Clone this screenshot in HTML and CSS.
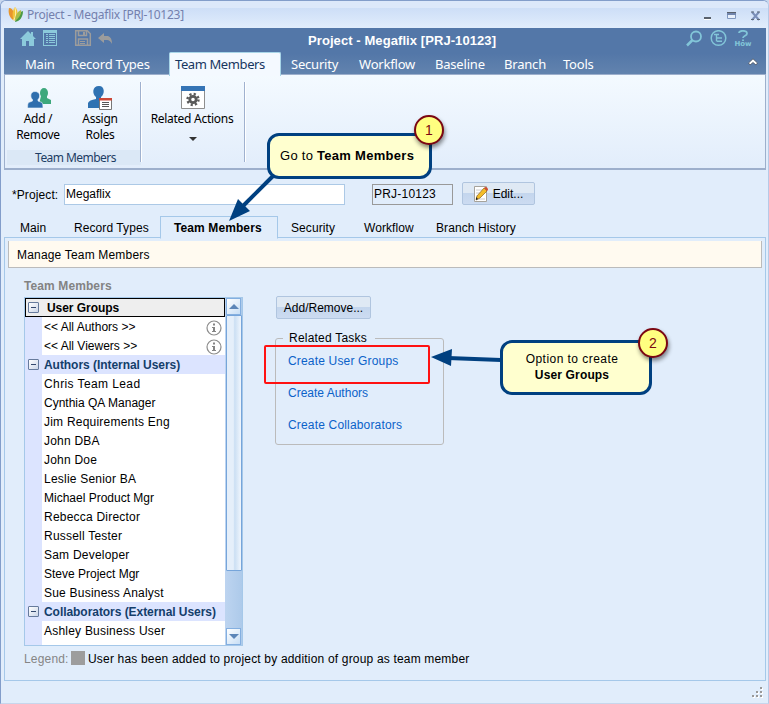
FILE: index.html
```html
<!DOCTYPE html>
<html lang="en">
<head>
<meta charset="utf-8">
<title>Project - Megaflix [PRJ-10123]</title>
<link rel="stylesheet" href="styles.css">
</head>
<body>
<div class="window">
  <header class="titlebar">
    <svg class="logo" width="16" height="16" viewBox="0 0 16 16"><path d="M1 1C6 1 7 9 5 13C1 10 0 5 1 1Z" fill="#e8962c"/><path d="M7 0C11 4 10 10 6 14C4 10 4 4 7 0Z" fill="#f4c33a"/><path d="M7 1C8 5 8 9 6 13" fill="none" stroke="#fff2a8"/><path d="M15 4C15 10 12 14 7 15C8 10 10 6 15 4Z" fill="#4b9a45"/><path d="M13 3C14 7 10 12 7 14C7 9 9 5 13 3Z" fill="#a8bd49"/></svg>
    <span class="caption">Project - Megaflix [PRJ-10123]</span>
    <svg class="controls" width="64" height="14" viewBox="0 0 64 14"><path d="M3 9h7v2H3z" fill="#59616c"/><path d="M3 11h7v1H3z" fill="#fff"/><path d="M26.500 4.500h8v6h-8z" fill="#e8f0fb" stroke="#8198c0"/><path d="M26 4h9v3h-9z" fill="#7185ad"/><path d="M26 4h9v1h-9z" fill="#59616c"/><path d="M51 4l7 8M58 4l-7 8" stroke="#7b8fb9" stroke-width="2"/><path d="M50 4h3M56 4h3M50 11.500h3M56 11.500h3" stroke="#606a79"/></svg>
  </header>

  <section class="ribbon-head">
    <div class="quick">
      <svg width="96" height="18" viewBox="0 0 96 18"><g fill="#8ccadb"><path d="M0 9L8 1l3 3V2h2v4l3 3h-2v7H9v-5H6v5H2V9z"/><g transform="translate(1 0)"><path fill-rule="evenodd" d="M22 0h14v16H22zM23 3v12h12V3z"/><path d="M25 4h2v1h-2zM28 4h6v1h-6zM25 6h2v1h-2zM28 6h6v1h-6zM25 8h2v1h-2zM28 8h6v1h-6zM25 10h2v1h-2zM28 10h6v1h-6zM25 12h2v1h-2zM28 12h6v1h-6z"/></g></g><g fill="none" stroke="#9c9c9c" stroke-width="1.500"><path d="M55.700.700h11.600l3 3v11.600H55.700z"/><path d="M58.500 1v4.500h8V1M58.500 15V9h9v6"/></g><path d="M63 2h2v3h-2zM60 11h5v1h-5zM60 13h5v1h-5zM84 3v3h4q4 1 4 8q-2-4-5-4h-3v3l-6-5z" fill="#9c9c9c"/></svg>
      <h1>Project - Megaflix [PRJ-10123]</h1>
      <div class="help">
      <svg width="41" height="18" viewBox="0 0 41 18" fill="none" stroke="#82c5d8"><circle cx="10" cy="6.500" r="5" stroke-width="1.800"/><path d="M6.500 10L1 15.500" stroke-width="2.500"/><circle cx="32.500" cy="8" r="7.300" stroke-width="1.500"/><path d="M28 4.500h5M30.500 5v6.500M31 8h5M31 11.300h5" stroke-width="1.400"/></svg>
      <div class="how"><svg width="12" height="11" viewBox="0 0 12 11"><path d="M2 3C2 0 10 0 10 3.500C10 6 6 5.500 6 8M6 9.500v1.500" fill="none" stroke="#82c5d8" stroke-width="1.800"/></svg><span>How</span></div>
      </div>
    </div>
    <nav class="ribbon-tabs">
      <span>Main</span><span>Record Types</span><span class="active">Team Members</span><span>Security</span><span>Workflow</span><span>Baseline</span><span>Branch</span><span>Tools</span>
      <svg width="10" height="8" viewBox="0 0 10 8"><path d="M.5 5L5 .800L9.500 5L8 7L5 4.500L2 7z" fill="#fff" stroke="#474f5d" stroke-width=".8"/></svg>
    </nav>
  </section>

  <section class="ribbon">
    <div class="group">
      <div class="tools">
        <div class="tool add">
          <svg width="26" height="24" viewBox="0 0 26 24"><g fill="#3da87c"><ellipse cx="18" cy="7" rx="4" ry="5"/><path d="M15 10h6v2l4 2v4H13z"/></g><path d="M9 5.500c-5 0-5 6-2.500 8v1.500l-4 1.500q-1 1-1 5.500h15.500q0-4.500-1-5.500l-4-1.500v-1.500c2.500-2 2.500-8-3-8z" fill="#2f6fae" stroke="#f0f7fe" stroke-width=".6"/></svg>
          <span>Add /<br>Remove</span>
        </div>
        <div class="tool">
          <svg width="24" height="24" viewBox="0 0 24 24"><path d="M11 0c-7 0-7 8-3 11v2q-7 1-8 4v5h18v-5q-1-3-5-4v-2c4-3 4-11-2-11z" fill="#2f72b2"/><path d="M11.500 12.500h12v11h-12z" fill="#fff" stroke="#777"/><path d="M11 12h13v2.500H11z" fill="#cc4837"/><path d="M14 16.500h7M14 18.500h7M14 20.500h7" stroke="#555"/></svg>
          <span>Assign<br>Roles</span>
        </div>
      </div>
      <div class="group-label">Team Members</div>
    </div>
    <div class="group actions">
      <svg width="24" height="24" viewBox="0 0 24 24"><path d="M.5.500h23v22H.5z" fill="#fff" stroke="#8e8e8e"/><path d="M0 0h24v5H0z" fill="#3574b5"/><circle cx="12" cy="13.500" r="3.200" fill="#fff" stroke="#595959" stroke-width="2.800"/><circle cx="12" cy="13.500" r="5.500" fill="none" stroke="#595959" stroke-width="2.400" stroke-dasharray="2.160 2.160"/></svg>
      <span>Related Actions</span>
      <i class="caret"></i>
    </div>
  </section>

  <div class="project-row">
    <label>*Project:</label>
    <div class="field name">Megaflix</div>
    <div class="field code">PRJ-10123</div>
    <button class="edit"><svg width="15" height="16" viewBox="0 0 15 16"><path d="M.5.500h12v15H.5z" fill="#fff" stroke="#a6a39b"/><path d="M2 4h9M2 7h6M2 10h4M2 13h9" stroke="#ccc"/><path d="M3 10L10 2l3 3l-7 7l-4 2z" fill="#f4bd29" stroke="#8e6721" stroke-width=".7"/><path d="M10 2l1-1q3 0 3 3l-1 1z" fill="#cf4d32"/><path d="M2 11l2 2l-2 1z" fill="#222"/></svg>Edit...</button>
  </div>

  <nav class="page-tabs">
    <span>Main</span><span>Record Types</span><span class="active">Team Members</span><span>Security</span><span>Workflow</span><span>Branch History</span>
  </nav>

  <main class="panel">
    <div class="section-title">Manage Team Members</div>
    <div class="content">
      <div class="team">
        <h2>Team Members</h2>
        <div class="listbox">
          <ul class="rows">
            <li class="head selected"><i class="toggle"></i><b>User Groups</b></li>
            <li class="tight"><span>&lt;&lt; All Authors &gt;&gt;</span><svg class="info" width="16" height="16" viewBox="0 0 16 16"><circle cx="8" cy="8" r="7" fill="none" stroke="#8c8c8c" stroke-width="1.200"/><path d="M7 3.500h2v2H7zM6 7h3v4h1v1H6v-1h1V8H6z" fill="#858585"/></svg></li>
            <li class="tight"><span>&lt;&lt; All Viewers &gt;&gt;</span><svg class="info" width="16" height="16" viewBox="0 0 16 16"><circle cx="8" cy="8" r="7" fill="none" stroke="#8c8c8c" stroke-width="1.200"/><path d="M7 3.500h2v2H7zM6 7h3v4h1v1H6v-1h1V8H6z" fill="#858585"/></svg></li>
            <li class="head"><i class="toggle"></i><b>Authors (Internal Users)</b></li>
            <li class="loose"><span>Chris Team Lead</span></li>
            <li class="tight"><span>Cynthia QA Manager</span></li>
            <li><span>Jim Requirements Eng</span></li>
            <li><span>John DBA</span></li>
            <li><span>John Doe</span></li>
            <li><span>Leslie Senior BA</span></li>
            <li class="tight"><span>Michael Product Mgr</span></li>
            <li><span>Rebecca Director</span></li>
            <li><span>Russell Tester</span></li>
            <li><span>Sam Developer</span></li>
            <li class="tight"><span>Steve Project Mgr</span></li>
            <li><span>Sue Business Analyst</span></li>
            <li class="head"><i class="toggle"></i><b>Collaborators (External Users)</b></li>
            <li><span>Ashley Business User</span></li>
          </ul>
          <div class="scrollbar"><i class="arrow up"></i><i class="thumb"></i><i class="arrow down"></i></div>
        </div>
        <div class="legend"><span>Legend:</span><i></i>User has been added to project by addition of group as team member</div>
      </div>
      <div class="side">
        <button>Add/Remove...</button>
        <fieldset>
          <legend>Related Tasks</legend>
          <a>Create User Groups</a><a class="tight">Create Authors</a><a>Create Collaborators</a>
        </fieldset>
      </div>
    </div>
  </main>
  <svg class="grip" width="12" height="12" viewBox="0 0 12 12"><path d="M9 1h2v2H9zM5 5h2v2H5zM9 5h2v2H9zM1 9h2v2H1zM5 9h2v2H5zM9 9h2v2H9z" fill="#fff"/><path d="M8 0h2v2H8zM4 4h2v2H4zM8 4h2v2H8zM0 8h2v2H0zM4 8h2v2H4zM8 8h2v2H8z" fill="#999"/></svg>
</div>

<svg class="arrows" width="769" height="704" viewBox="0 0 769 704"><g stroke="#004080" stroke-width="4"><path d="M273 176L242 207"/><path d="M501 360L448 358"/></g><path d="M229 221L238 199L250 211zM431 357L452 349L451 366z" fill="#004080"/></svg>
<div class="highlight"></div>
<div class="callout one"><p>Go to <b>Team Members</b></p><i>1</i></div>
<div class="callout two"><p>Option to create<br><b>User Groups</b></p><i>2</i></div>
</body>
</html>
```
FILE: styles.css
```css
* { box-sizing: border-box; }
body { margin: 0; width: 769px; height: 704px; position: relative; overflow: hidden; background: #c9d8ee; font: 12px/16px "Liberation Sans", sans-serif; color: #000; letter-spacing: .22px; }
svg { display: block; flex: none; }
i { font-style: normal; }
p, h1, h2, ul { margin: 0; padding: 0; }

.window { width: 769px; height: 704px; padding: 0 3px; border: 1px solid #829dca; border-right-color: #b7c9e6; border-bottom-color: #c7d6ec; border-radius: 6px 6px 0 0; background: #e1edfb; }
.titlebar { height: 27px; margin: 0 -3px; padding: 0 7px; display: flex; align-items: center; border-radius: 5px 5px 0 0; background: linear-gradient(#dce8fa 0 7px, #cddef7 7px, #e1edfc); }
.caption { flex: 1; margin-left: 3px; font: 12px/18px "Noto Sans", sans-serif; letter-spacing: -.27px; color: #7480ad; }
.controls { margin-right: -4px; }

.ribbon-head { height: 46px; width: 762px; background: linear-gradient(#5377a8 55%, #6283ae); }
.quick { height: 24px; display: flex; align-items: flex-start; padding: 2px 14px 0 16px; color: #fff; }
.quick h1 { margin: 2px 0 0 192px; font: bold 13px/17px "Liberation Sans", sans-serif; letter-spacing: .08px; width: 190px; white-space: nowrap; }
.help { display: flex; margin-left: auto; gap: 7px; }
.how { display: flex; flex-direction: column; align-items: center; width: 18px; color: #82c5d8; font: bold 7px/6px "DejaVu Sans", sans-serif; letter-spacing: 0; }
.ribbon-tabs { height: 22px; padding-left: 21px; display: grid; grid-template-columns: 46px 98px 122px 68px 76px 69px 59px 185px auto; font: 13px/24px "Noto Sans", sans-serif; letter-spacing: -.2px; color: #fff; }
.ribbon-tabs span { white-space: nowrap; }
.ribbon-tabs .active { width: 112px; padding-left: 5px; background: #f4f9ff; border: 1px solid #a8d5e8; border-bottom: 0; border-radius: 2px 2px 0 0; color: #17365f; line-height: 22px; letter-spacing: -.4px; }
.ribbon-tabs svg { margin-top: 6px; }

.ribbon { height: 96px; width: 762px; padding: 2px; display: flex; background: linear-gradient(#f4faff, #e2edfb); border: 1px solid #9dafcc; border-bottom-width: 2px; font: 12px/16px "Noto Sans", sans-serif; letter-spacing: -.28px; text-align: center; }
.group { width: 134px; height: 88px; position: relative; }
.group::after { content: ""; position: absolute; right: -1px; top: 5px; width: 2px; height: 80px; background: linear-gradient(90deg, #9fb1cf 50%, #fff 50%); }
.tools { display: flex; height: 73px; padding: 9px 0 0 0; }
.tool { width: 62px; display: flex; flex-direction: column; align-items: center; gap: 1px; }
.add svg { margin-left: 2px; }
.group-label { height: 15px; line-height: 15px; padding-left: 3px; background: #dbe8f6; color: #1d3d64; letter-spacing: -.55px; }
.actions { width: 104px; padding-top: 9px; display: flex; flex-direction: column; align-items: center; gap: 1px; white-space: nowrap; }
.actions span { margin-left: -2px; }
.caret { margin-top: 9px; border: 4px solid transparent; border-top-color: #333; border-bottom: 0; }

.project-row { display: flex; padding: 12px 0 0 8px; height: 36px; align-items: flex-start; }
.project-row label { width: 52px; padding-top: 5px; letter-spacing: .1px; }
.field { height: 21px; padding: 1px 1px; border: 1px solid #acc9e6; background: #fff; margin-top: 2px; }
.name { width: 281px; margin-right: 27px; letter-spacing: 0; }
.code { width: 81px; margin-right: 9px; background: #e1edfb; border-color: #999; }
button { height: 23px; padding: 0; display: flex; align-items: center; justify-content: center; border: 1px solid #b0c5df; border-radius: 2px; background: linear-gradient(#dfe9f4 50%, #c4d6ed 50%, #ccdbf1); font: inherit; letter-spacing: 0; color: #000; }
.edit { width: 73px; gap: 4px; }

.page-tabs { height: 32px; padding: 10px 0 0 16px; display: grid; grid-template-columns: 54px 86px 131px 73px 72px auto; line-height: 25px; letter-spacing: .08px; }
.page-tabs span { white-space: nowrap; height: 22px; }
.page-tabs .active { height: 23px; width: 118px; padding-left: 13px; line-height: 22px; font-weight: bold; letter-spacing: .1px; border: 1px solid #a5c8e9; border-bottom-color: #e1edfb; background: #e1edfb; position: relative; z-index: 1; }
.panel { width: 762px; height: 444px; border: 1px solid #a5c8e9; padding: 3px 3px 0 3px; margin-top: -1px; }
.section-title { height: 27px; padding: 6px 8px 4px; background: #fffaf0; border: 1px solid #bbb; border-top: 0; letter-spacing: .18px; }
.content { display: flex; padding: 10px 0 0 16px; }
.team { width: 251px; }
h2 { font: bold 12px/16px "Liberation Sans", sans-serif; letter-spacing: .1px; color: #838383; }
.listbox { width: 219px; height: 349px; margin-top: 3px; display: flex; border: 1px solid #a5c8e9; background: #fff; }
.rows { width: 200px; height: 347px; list-style: none; background: linear-gradient(90deg, #dce4ff 17px, #fff 17px); }
.rows li { height: 19px; display: flex; align-items: center; padding-left: 19px; white-space: nowrap; }
.rows .head { padding-left: 3px; gap: 5px; background: #dce4ff; color: #143e6b; }
.rows .selected { height: 19px; padding-left: 2px; gap: 8px; background: #eee; color: #000; border: 1px solid #000; }
.rows b { letter-spacing: -.05px; }
.tight { letter-spacing: 0; }
.loose { letter-spacing: .4px; }
.toggle { width: 11px; height: 11px; border: 1px solid #677b9d; border-radius: 1px; background: linear-gradient(#34486e, #34486e) 2px 4px / 5px 1px no-repeat, linear-gradient(135deg, #fff, #ccd6e8); }
.info { margin: 2px 3px 0 auto; }
.scrollbar { width: 17px; flex: 1; display: flex; flex-direction: column; padding-left: 1px; background: linear-gradient(90deg, #bdd4f0, #adcaea); }
.arrow { height: 17px; width: 15px; border: 1px solid #84afe0; background: linear-gradient(135deg, #fff, #c7def5); display: grid; place-items: center; }
.arrow::before { content: ""; border: 5px solid transparent; }
.up::before { border-top: 0; border-bottom-color: #5c86b8; }
.down::before { border-bottom: 0; border-top-color: #5c86b8; }
.thumb { width: 16px; height: 256px; border: 1px solid #76a5da; border-radius: 1px; background: linear-gradient(90deg, #e5effa 45%, #cbdff3 55%, #f0f6fd); }
.down { margin-top: auto; }
.legend { display: flex; margin-top: 5px; white-space: nowrap; letter-spacing: .18px; }
.legend span { flex: none; color: #858585; width: 47px; }
.legend i { flex: none; width: 14px; height: 14px; margin-right: 3px; background: #9d9d9d; }

.side { padding-top: 18px; }
.side button { width: 95px; margin-left: 1px; }
fieldset { width: 169px; height: 115px; margin: 11px 0 0; padding: 7px 12px; border: 1px solid #bbb; border-radius: 3px; display: flex; flex-direction: column; gap: 16px; letter-spacing: .17px; }
legend { padding: 0 6px; margin-left: -5px; width: 92px; letter-spacing: .22px; }
fieldset a { color: #0b62c9; white-space: nowrap; }
.grip { margin: 6px 0 0 748px; }

.arrows, .highlight, .callout { position: absolute; z-index: 2; }
.arrows { inset: 0; }
.highlight { left: 264px; top: 345px; width: 166px; height: 39px; border: 2px solid #f11; border-radius: 2px; }
.callout { border: 3px solid #004080; border-radius: 12px; background: #ffffcf; }
.one { left: 267px; top: 133px; width: 165px; height: 46px; padding: 12px 10px 8px; white-space: nowrap; font-size: 13px; letter-spacing: .28px; }
.two { left: 500px; top: 340px; width: 152px; height: 55px; padding-top: 8px; padding-right: 8px; text-align: center; letter-spacing: .45px; }
.two b { letter-spacing: .15px; }
.callout i { position: absolute; right: -15px; top: -21px; width: 30px; height: 30px; border: 2px solid #7b0712; border-radius: 50%; background: #ffff80; color: #7b0712; text-align: center; line-height: 26px; box-shadow: 1px 3px 4px #0007; font-size: 14px; letter-spacing: 0; }
.two i { right: -19px; top: -15px; }
```
